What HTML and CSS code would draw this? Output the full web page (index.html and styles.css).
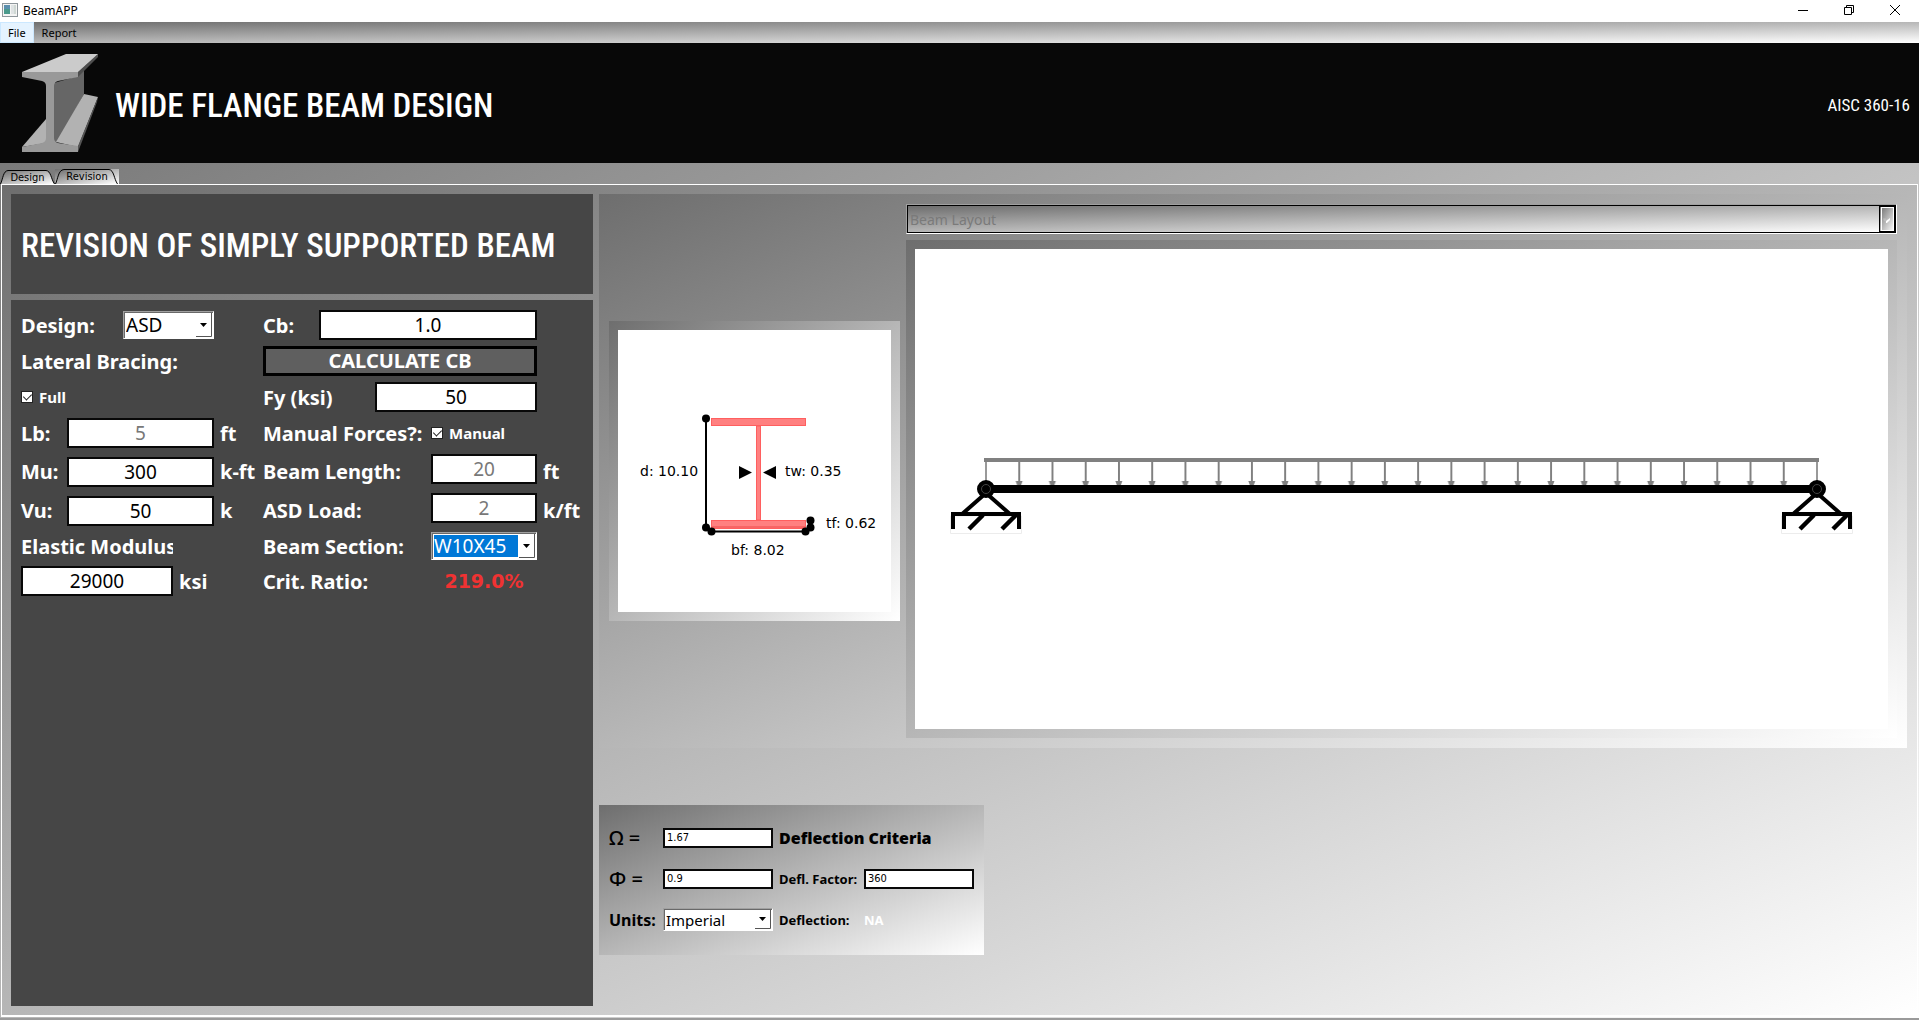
FILE: index.html
```html
<!DOCTYPE html>
<html lang="en">
<head>
<meta charset="utf-8">
<title>BeamAPP</title>
<link rel="stylesheet" href="styles.css">
</head>
<body>
<div class="titlebar">
  <svg class="app-icon" width="16" height="14" viewBox="0 0 16 14" aria-hidden="true"><rect x=".5" y=".5" width="15" height="13" fill="#f4f4f4" stroke="#8f979c"/><rect x="2" y="2" width="6" height="9" fill="#4b9a8c"/><rect x="2" y="2" width="6" height="4" fill="#5b8fae"/><rect x="9" y="2" width="3" height="9" fill="#dfe3e4"/><rect x="12" y="2" width="2" height="9" fill="#cfd8d4"/></svg>
  <span class="app-name">BeamAPP</span>
  <div class="window-buttons">
    <button type="button" aria-label="Minimize"><svg width="10" height="10" viewBox="0 0 10 10"><path d="M0 5.500H10" stroke="#000"/></svg></button>
    <button type="button" aria-label="Restore"><svg width="10" height="10" viewBox="0 0 10 10"><path d="M.5 2.500H7.500V9.500H.5ZM2.500 2.500V.5H9.500V7.500H7.500" fill="none" stroke="#000"/></svg></button>
    <button type="button" aria-label="Close"><svg width="10" height="10" viewBox="0 0 10 10"><path d="M0 0L10 10M10 0L0 10" stroke="#000"/></svg></button>
  </div>
</div>
<nav class="menubar">
  <button type="button" class="menu-item active">File</button>
  <button type="button" class="menu-item">Report</button>
</nav>
<header class="banner">
  <svg class="logo" width="76" height="98" viewBox="22 54 76 98" aria-hidden="true">
    <path d="M54 83L78 76L84 68V94L58 142H54Z" fill="#666"/>
    <path d="M84 94L98 97L78 147L56 142Z" fill="#b2b2b2"/>
    <path d="M98 97L97 102L78 152V146Z" fill="#555"/>
    <path d="M46 119V143L22 147Z" fill="#b2b2b2"/>
    <path d="M98 54V57L78 77V72Z" fill="#4e4e4e"/>
    <path d="M66 54H98L78 72H22Z" fill="#cbcbcb"/>
    <path d="M22 72H78V77L58 81Q54 82 54 86V138Q54 142 58 143L78 146V152H22V147L42 143Q46 142 46 138V86Q46 82 42 81L22 77Z" fill="#999"/>
  </svg>
  <h1>WIDE FLANGE BEAM DESIGN</h1>
  <span class="code">AISC 360-16</span>
</header>
<div class="tabs" role="tablist">
  <button type="button" class="tab" role="tab"><svg viewBox="0 0 55 14" width="55" height="14" aria-hidden="true"><path d="M.5 14C3 9 3 1 8 .5H46C51 1 51 9 54.500 14" fill="url(#tabfill)" stroke="#000"/></svg><span>Design</span></button>
  <button type="button" class="tab current" role="tab" aria-selected="true"><svg viewBox="0 0 63 15" width="63" height="15" aria-hidden="true"><defs><linearGradient id="tabfill" x1="0" y1="0" x2="1" y2="1"><stop offset="0" stop-color="#6e6e6e"/><stop offset="1" stop-color="#fff"/></linearGradient></defs><path d="M.5 15C3 10 3 1 9 .5H54C59 1 59 10 62.500 15" fill="url(#tabfill)" stroke="#000"/></svg><span>Revision</span></button>
</div>
<main class="pane">
  <section class="inputs">
    <div class="dark heading"><h2>REVISION OF SIMPLY SUPPORTED BEAM</h2></div>
    <form class="dark form">
      <div class="col">
        <div class="row"><label class="w-wide" for="design">Design:</label>
          <span class="combo"><select id="design"><option>ASD</option><option>LRFD</option></select><svg class="drop" width="16" height="24" viewBox="0 0 16 24" aria-hidden="true"><path d="M0 23.500H15.500V0" fill="none" stroke="#555"/><path d="M4 10H11L7.500 14Z"/></svg></span></div>
        <div class="row"><span class="text">Lateral Bracing:</span></div>
        <div class="row"><label class="check"><input type="checkbox" checked>Full</label></div>
        <div class="row"><label class="w-short" for="lb">Lb:</label><input class="field medium" id="lb" value="5" disabled><span class="unit">ft</span></div>
        <div class="row low"><label class="w-short" for="mu">Mu:</label><input class="field medium" id="mu" value="300"><span class="unit">k-ft</span></div>
        <div class="row low"><label class="w-short" for="vu">Vu:</label><input class="field medium" id="vu" value="50"><span class="unit">k</span></div>
        <div class="row"><label class="clipped" for="em">Elastic Modulus:</label></div>
        <div class="row"><input class="field modulus" id="em" value="29000"><span class="unit">ksi</span></div>
      </div>
      <div class="col second">
        <div class="row"><label class="w-cb" for="cb">Cb:</label><input class="field grow" id="cb" value="1.0"></div>
        <div class="row"><button type="button" class="calc">CALCULATE CB</button></div>
        <div class="row"><label class="w-fy" for="fy">Fy (ksi)</label><input class="field grow" id="fy" value="50"></div>
        <div class="row"><span class="w-label">Manual Forces?:</span><label class="check"><input type="checkbox" checked>Manual</label></div>
        <div class="row high"><label class="w-label" for="len">Beam Length:</label><input class="field small" id="len" value="20" disabled><span class="unit">ft</span></div>
        <div class="row high"><label class="w-label" for="load">ASD Load:</label><input class="field small" id="load" value="2" disabled><span class="unit">k/ft</span></div>
        <div class="row"><label class="w-label" for="section">Beam Section:</label>
          <span class="combo chosen"><select id="section"><option>W10X45</option></select><svg class="drop" width="16" height="24" viewBox="0 0 16 24" aria-hidden="true"><path d="M0 23.500H15.500V0" fill="none" stroke="#555"/><path d="M4 10H11L7.500 14Z"/></svg></span></div>
        <div class="row"><span class="w-label">Crit. Ratio:</span><output class="ratio">219.0%</output></div>
      </div>
    </form>
  </section>
  <section class="results">
    <div class="views">
      <div class="frame">
        <svg class="section-view" viewBox="0 0 273 282" role="img" aria-label="Beam section">
          <g fill="#ff8080" stroke="#ff5f5f"><rect x="138.500" y="96" width="4" height="94"/><rect x="93.500" y="88.500" width="94" height="7"/><rect x="93.500" y="190.500" width="94" height="8"/><path d="M94 197H187" stroke="#f04a4a"/></g>
          <path d="M88 88V198M93 201.500H188M192.500 190V198" stroke="#000" stroke-width="2"/>
          <circle cx="88" cy="88.500" r="4"/><circle cx="88" cy="197.500" r="4"/><circle cx="93.500" cy="201.500" r="4"/><circle cx="187.500" cy="201.500" r="4"/><circle cx="192.500" cy="197.500" r="4"/><circle cx="192.500" cy="190.500" r="4"/>
          <path d="M121 136V149L134 142.500ZM158 136V149L145 142.500Z"/>
          <text x="22" y="146">d: 10.10</text><text x="167" y="146">tw: 0.35</text><text x="208" y="198">tf: 0.62</text><text x="113" y="225">bf: 8.02</text>
        </svg>
      </div>
      <div class="layout">
        <div class="layout-select"><select aria-label="Diagram" disabled><option>Beam Layout</option></select><span class="mini"><svg width="16" height="25" viewBox="0 0 16 25" aria-hidden="true"><path d="M3 11.500H6V14H4ZM6 14L9 11V13L7 16H5Z" fill="#bbb"/><path d="M6 14L10 11V13L7 16H6Z" fill="#fff"/></svg></span></div>
        <div class="frame">
          <svg class="beam-view" viewBox="0 0 973 480" role="img" aria-label="Simply supported beam under distributed load">
            <defs>
              <pattern id="load-arrows" x="87.620" y="213" width="33.240" height="23" patternUnits="userSpaceOnUse"><path d="M16.620 0V20" stroke="#808080" stroke-width="2"/><path d="M13 19H20L18.500 23H14.500Z" fill="#808080"/></pattern>
              <g id="support"><path d="M0 4L-25 26M0 4L25 26" stroke="#000" stroke-width="4"/><path d="M-35.500 27H35.500V44.500H-35.500Z" fill="#fff" stroke="#ececec"/><path d="M-3 26L-17 40M30 26L16 40" stroke="#000" stroke-width="4.500"/><path d="M-33 40V25H33V40" fill="none" stroke="#000" stroke-width="4"/><circle r="7" fill="#000" stroke="#000" stroke-width="4"/><circle r="4.500" fill="none" stroke="#444"/></g>
            </defs>
            <path d="M71 213V232M902 213V232" stroke="#999" stroke-width="2"/>
            <rect x="87.620" y="213" width="797.760" height="23" fill="url(#load-arrows)"/>
            <path d="M69 211H904" stroke="#808080" stroke-width="4"/>
            <path d="M71 240H902" stroke="#000" stroke-width="8"/>
            <use href="#support" x="71" y="240"/><use href="#support" x="902" y="240"/>
          </svg>
        </div>
      </div>
    </div>
    <div class="lower">
      <form class="criteria">
        <label for="omega" class="greek">Ω =</label><input class="field tiny" id="omega" value="1.67"><strong class="wide">Deflection Criteria</strong>
        <label for="phi" class="greek">Φ =</label><input class="field tiny" id="phi" value="0.9"><label class="minor" for="factor">Defl. Factor:</label><input class="field tiny" id="factor" value="360">
        <label for="units">Units:</label><span class="combo units"><select id="units"><option>Imperial</option><option>Metric</option></select><svg class="drop" width="16" height="19" viewBox="0 0 16 19" aria-hidden="true"><path d="M0 18.500H15.500V0" fill="none" stroke="#555"/><path d="M4 7H11L7.500 11Z"/></svg></span><span class="minor">Deflection:</span><output class="minor na">NA</output>
      </form>
    </div>
  </section>
</main>
</body>
</html>
```
FILE: styles.css
```css
* { box-sizing: border-box; }

:root {
  --metal: linear-gradient(to bottom right, #6e6e6e, #fff);
  --ui: "Noto Sans", "Open Sans", sans-serif;
  --small-ui: "DejaVu Sans Condensed", "DejaVu Sans", sans-serif;
  --display: "Roboto Condensed", "Open Sans Condensed", sans-serif;
}

body {
  margin: 0;
  min-height: 100vh;
  display: flex;
  flex-direction: column;
  background: var(--metal);
  border-bottom: 2px solid #9a9a9a;
  font-family: var(--ui);
  color: #000;
}

button, input, select { font-family: inherit; margin: 0; border-radius: 0; }

.titlebar {
  height: 22px;
  display: flex;
  align-items: center;
  gap: 5px;
  padding: 0 1px 2px 2px;
  background: #fff;
  font-size: 12px;
}

.window-buttons { margin-left: auto; display: flex; height: 18px; }
.window-buttons button {
  width: 46px;
  padding: 0;
  border: 0;
  background: none;
  display: flex;
  align-items: center;
  justify-content: center;
}

.menubar { height: 21px; display: flex; background: var(--metal); }
.menu-item {
  padding: 0 7px;
  border: 1px solid transparent;
  background: none;
  font-size: 11px;
  line-height: 18px;
}
.menu-item.active { background: #e5f3ff; border-color: #cce8ff; }

.banner {
  height: 120px;
  padding: 0 9px 0 22px;
  display: flex;
  align-items: center;
  background: #080808;
  color: #fff;
  font-family: var(--display);
}
.banner h1 { margin: 0 0 0 17px; padding-top: 4px; font-size: 33px; font-weight: 500; }
.code { margin-left: auto; padding-top: 4px; font-size: 17px; }

.tabs { height: 21px; display: flex; align-items: flex-end; }
.tab {
  position: relative;
  width: 55px;
  height: 14px;
  padding: 0;
  border: 0;
  background: none;
  font: 11px/16px var(--small-ui);
}
.tab svg { position: absolute; left: 0; bottom: 0; }
.tab span { position: relative; }
.tab.current { width: 64px; height: 15px; background: var(--metal); }

.pane {
  flex: 1;
  display: flex;
  gap: 6px;
  margin: 0 1px 1px;
  padding: 9px 10px 9px 9px;
  border: 1px solid #fff;
  border-bottom-width: 2px;
  background: var(--metal);
}

.inputs { width: 582px; flex: none; display: flex; flex-direction: column; gap: 6px; }
.dark { background: #464646; color: #fff; }
.heading { height: 100px; display: flex; align-items: center; padding: 4px 10px 0; }
.heading h2 { margin: 0; font: 500 33px/40px var(--display); white-space: nowrap; }

.form { flex: 1; display: flex; gap: 5px; padding: 10px; font-size: 20px; font-weight: 700; }
.col {
  width: 237px;
  display: grid;
  grid-template-rows: 30px 30px 30px 30px 33px 33px 28px 30px;
  row-gap: 6px;
  align-content: start;
}
.second { width: 320px; }
.row { display: flex; align-items: center; line-height: 28px; white-space: nowrap; min-width: 0; }
.row > :first-child { flex: none; }
.row > label:not(.check), .text, .w-label, .unit { padding-top: 2px; }
.low .field { align-self: flex-end; }
.high .field { align-self: flex-start; }
.w-wide { width: 102px; }
.w-short { width: 46px; }
.w-cb { width: 56px; }
.w-fy { width: 112px; }
.w-label { width: 168px; }
.clipped { width: 152px; overflow: hidden; }
.unit { margin-left: 6px; }
.check { display: flex; align-items: center; gap: 6px; font-size: 15px; }

input[type="checkbox"] {
  appearance: none;
  width: 12px;
  height: 12px;
  border: 1px solid #222;
  background: #fff;
  display: grid;
  place-items: center;
}
input[type="checkbox"]:checked::before {
  content: "";
  width: 4px;
  height: 7px;
  margin-bottom: 2px;
  border: solid #222;
  border-width: 0 1px 1px 0;
  transform: rotate(45deg);
}

.field {
  height: 30px;
  min-width: 0;
  padding: 0 2px;
  border: 2px solid #080808;
  background: #fff;
  color: #000;
  font-size: 19px;
  text-align: center;
}
.field:disabled { color: #787878; }
.medium { width: 147px; }
.modulus { width: 152px; }
.small { width: 106px; }
.second .grow { width: 218px; }
.second .w-fy + .grow { width: 162px; }

.calc {
  width: 274px;
  height: 30px;
  padding: 0;
  border: 3px solid #000;
  background: #5f5f5f;
  color: #fff;
  font-size: 20px;
  font-weight: 700;
  line-height: 22px;
}

.combo { position: relative; width: 91px; height: 28px; display: block; }
.combo select {
  appearance: none;
  width: 100%;
  height: 100%;
  padding: 0 2px;
  border: 1px solid;
  border-color: #a0a0a0 #fff #fff #a0a0a0;
  box-shadow: inset 1px 1px #696969;
  background: #fff;
  color: #000;
  font-size: 19px;
  line-height: 22px;
}
.drop { position: absolute; right: 2px; top: 2px; pointer-events: none; }
.chosen { width: 106px; }
.chosen select {
  color: #fff;
  background: linear-gradient(#0078d7, #0078d7) 2px 2px / 84px 22px no-repeat #fff;
}
.ratio { width: 106px; text-align: center; color: #f03232; font-family: "DejaVu Sans", sans-serif; font-size: 19px; }

.results { flex: 1; min-width: 0; display: flex; flex-direction: column; gap: 6px; }
.views { display: flex; align-items: center; gap: 6px; padding: 10px; background: var(--metal); }
.frame { padding: 9px; background: var(--metal); }
.frame svg { display: block; background: #fff; }
.section-view { width: 273px; height: 282px; font: 14px "DejaVu Sans", sans-serif; }
.layout { flex: 1; min-width: 0; display: flex; flex-direction: column; gap: 6px; }
.beam-view { width: 100%; height: auto; }

.layout-select {
  position: relative;
  height: 30px;
  border: 1px solid;
  border-color: #a0a0a0 #fff #fff #a0a0a0;
}
.layout-select select {
  appearance: none;
  display: block;
  width: 100%;
  height: 28px;
  padding: 0 2px;
  border: 1px solid #000;
  background: var(--metal);
  color: #7a7a7a;
  opacity: 1;
  font-size: 14px;
}
.mini {
  position: absolute;
  top: 0;
  right: 0;
  bottom: 0;
  width: 17px;
  border: solid #000;
  border-width: 2px 2px 2px 1px;
  outline: 1px solid #fff;
  outline-offset: -3px;
  background: var(--metal);
  overflow: hidden;
}

.lower { flex: 1; display: flex; align-items: center; }
.criteria {
  display: grid;
  grid-template-columns: 48px 110px 79px 110px;
  grid-auto-rows: 41px;
  column-gap: 6px;
  align-items: center;
  padding: 12px 10px 15px;
  background: var(--metal);
  font-size: 16px;
  font-weight: 700;
  white-space: nowrap;
}
.greek { font-size: 20px; font-weight: 500; }
.wide { grid-column: span 2; }
.minor { font-size: 13px; }
.na { color: #fff; }
.tiny { height: 20px; font: 11px var(--small-ui); text-align: left; }
.units { width: 110px; height: 23px; }
.units select { font-size: 15px; line-height: 18px; }
```
